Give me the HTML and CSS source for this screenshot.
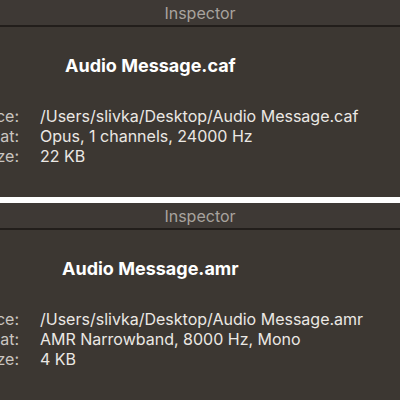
FILE: index.html
```html
<!DOCTYPE html>
<html>
<head>
<meta charset="utf-8">
<link rel="stylesheet" href="styles.css">
</head>
<body>
<section class="panel panel-a">
  <header class="titlebar">Inspector</header>
  <div class="body">
    <h1 class="name">Audio Message.caf</h1>
    <div class="info">
      <div class="row"><span class="label">Source:</span><span class="value">/Users/slivka/Desktop/Audio Message.caf</span></div>
      <div class="row"><span class="label">Format:</span><span class="value">Opus, 1 channels, 24000 Hz</span></div>
      <div class="row"><span class="label">Size:</span><span class="value">22 KB</span></div>
    </div>
  </div>
</section>
<div class="divider"></div>
<section class="panel panel-b">
  <header class="titlebar">Inspector</header>
  <div class="body">
    <h1 class="name">Audio Message.amr</h1>
    <div class="info">
      <div class="row"><span class="label">Source:</span><span class="value">/Users/slivka/Desktop/Audio Message.amr</span></div>
      <div class="row"><span class="label">Format:</span><span class="value">AMR Narrowband, 8000 Hz, Mono</span></div>
      <div class="row"><span class="label">Size:</span><span class="value">4 KB</span></div>
    </div>
  </div>
</section>
</body>
</html>
```
FILE: styles.css
```css
html, body {
  margin: 0;
  padding: 0;
  width: 400px;
  height: 400px;
  overflow: hidden;
  background: #3c3732;
  font-family: Inter, "Liberation Sans", Arial, sans-serif;
}
.panel {
  background: #3c3732;
  display: flex;
  flex-direction: column;
}
.panel-a { height: 197px; }
.panel-b { height: 197px; }
.titlebar {
  height: 25px;
  border-bottom: 2px solid #221e1b;
  background: #3e3935;
  color: #a8a39e;
  font-size: 16px;
  line-height: 27px;
  text-align: center;
}
.divider {
  height: 6px;
  background: #ffffff;
}
.name {
  margin: 0;
  font-size: 18px;
  font-weight: bold;
  color: #ffffff;
  line-height: 24px;
  padding-top: 27px;
}
.panel-a .name { padding-left: 65px; }
.panel-b .name { padding-left: 62px; }
.info {
  margin-top: 28px;
  display: flex;
  flex-direction: column;
}
.row {
  display: flex;
  height: 20px;
  line-height: 20px;
  font-size: 16px;
}
.label {
  flex: 0 0 80px;
  margin-left: -40px;
  padding-right: 21px;
  box-sizing: border-box;
  text-align: right;
  color: #cac5c0;
  white-space: nowrap;
}
.value {
  color: #ebe8e4;
  white-space: nowrap;
}
```
